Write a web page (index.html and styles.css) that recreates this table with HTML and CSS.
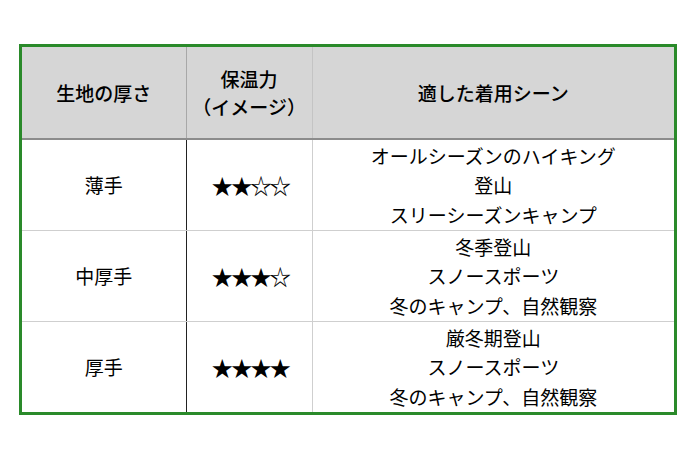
FILE: index.html
```html
<!DOCTYPE html>
<html lang="ja">
<head>
<meta charset="utf-8">
<link rel="stylesheet" href="styles.css">
</head>
<body>
<table class="spec">
  <colgroup>
    <col class="c1"><col class="c2"><col class="c3">
  </colgroup>
  <thead>
    <tr class="head">
      <th class="h1">生地の厚さ</th>
      <th class="h2">保温力<br>（イメージ）</th>
      <th class="h3">適した着用シーン</th>
    </tr>
  </thead>
  <tbody>
    <tr class="row">
      <td class="name">薄手</td>
      <td class="stars"><span class="st">★★☆☆</span></td>
      <td class="scene">オールシーズンのハイキング<br>登山<br>スリーシーズンキャンプ</td>
    </tr>
    <tr class="row">
      <td class="name">中厚手</td>
      <td class="stars"><span class="st">★★★☆</span></td>
      <td class="scene">冬季登山<br>スノースポーツ<br>冬のキャンプ、自然観察</td>
    </tr>
    <tr class="row last">
      <td class="name">厚手</td>
      <td class="stars"><span class="st">★★★★</span></td>
      <td class="scene">厳冬期登山<br>スノースポーツ<br>冬のキャンプ、自然観察</td>
    </tr>
  </tbody>
</table>
</body>
</html>
```

FILE: styles.css
```css
html, body {
  margin: 0;
  padding: 0;
  background: #ffffff;
}
body {
  padding: 44px 0 0 19px;
  font-family: "Noto Sans CJK JP", "Noto Sans", sans-serif;
  color: #000;
}
.spec {
  border-collapse: collapse;
  table-layout: fixed;
  width: 658px;
  border: 3px solid #2a8a2a;
}
.c1 { width: 164px; }
.c2 { width: 125px; }
.c3 { width: 360px; }
.spec th, .spec td {
  padding: 0;
  text-align: center;
  vertical-align: middle;
}
.head th {
  background: #d6d6d6;
  height: 91px;
  font-size: 19px;
  font-weight: 500;
  line-height: 28px;
  border-bottom: 2px solid #8c8c8c;
}
.head .h1 { border-right: 1px solid #a8a8a8; }
.head .h2 { border-right: 1px solid #c4c4c4; }
.row td {
  height: 90px;
  font-size: 19px;
  line-height: 29.5px;
  border-bottom: 1px solid #cfcfcf;
}
.row.last td { border-bottom: none; }
.row .name { border-right: 1px solid #222; }
.row .stars {
  border-right: 1px solid #cfcfcf;
}
.st {
  font-family: "Noto Sans CJK JP", sans-serif;
  font-size: 21.5px;
  letter-spacing: -2.2px;
  margin-right: -2.2px;
}
.row .scene { font-size: 19px; }
```
